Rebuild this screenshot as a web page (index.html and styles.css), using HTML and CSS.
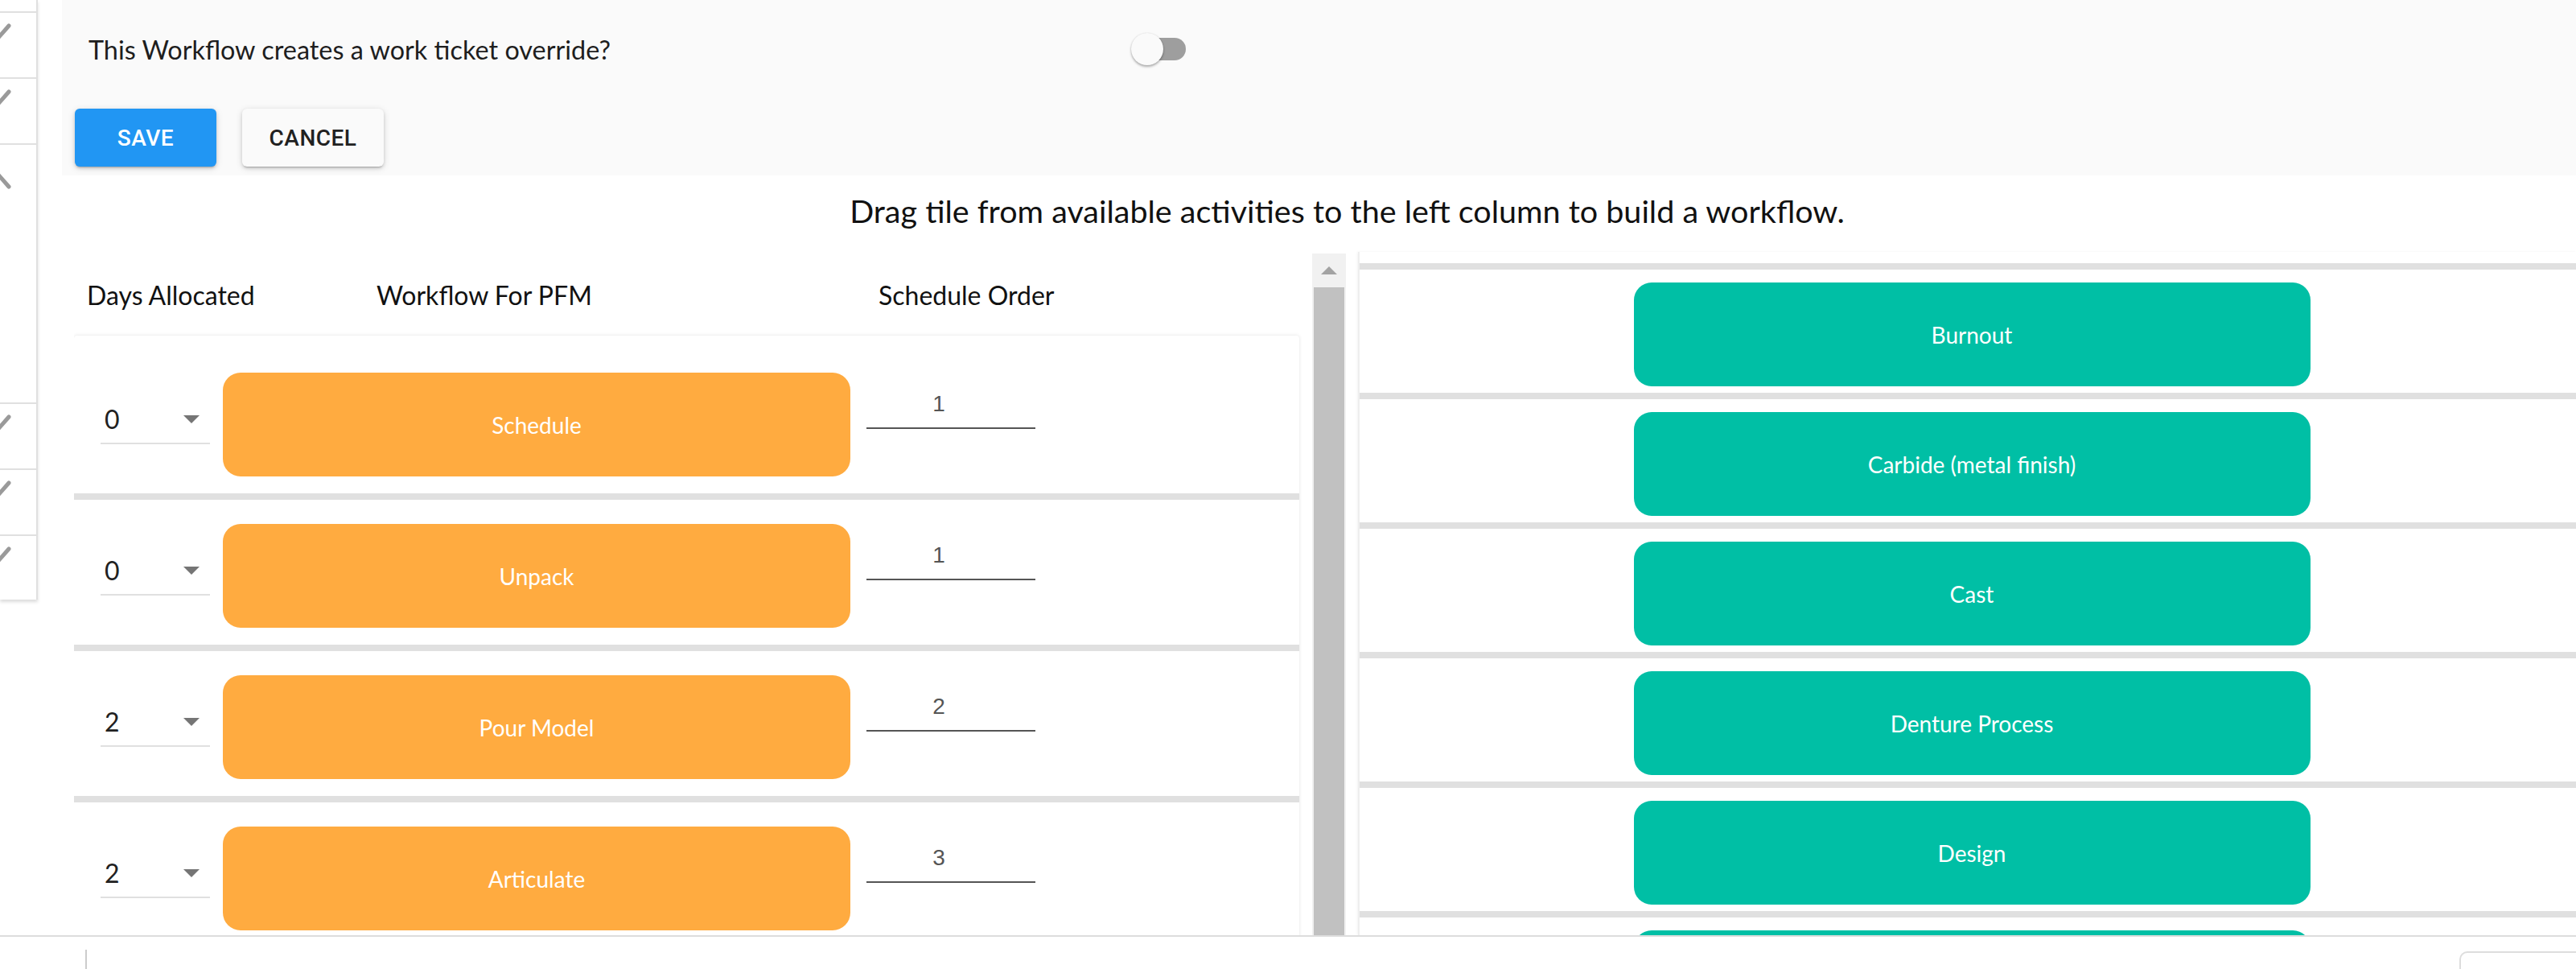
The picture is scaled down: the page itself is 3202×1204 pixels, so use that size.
FILE: index.html
```html
<!DOCTYPE html>
<html lang="en">
<head>
<meta charset="utf-8">
<title>Workflow builder</title>
<link rel="stylesheet" href="styles.css">
</head>
<body>
<div class="app">
  <aside class="sidebar">
    <div class="side-row"><svg class="mark" viewBox="0 0 14 22"><line x1="-3" y1="20" x2="11" y2="4"/></svg></div>
    <div class="side-row"><svg class="mark" viewBox="0 0 14 22"><line x1="-3" y1="20" x2="11" y2="4"/></svg></div>
    <div class="side-row tall"><svg class="mark" viewBox="0 0 14 22"><line x1="-3" y1="2" x2="11" y2="18"/></svg></div>
    <div class="side-row"><svg class="mark" viewBox="0 0 14 22"><line x1="-3" y1="20" x2="11" y2="4"/></svg></div>
    <div class="side-row"><svg class="mark" viewBox="0 0 14 22"><line x1="-3" y1="20" x2="11" y2="4"/></svg></div>
    <div class="side-row"><svg class="mark" viewBox="0 0 14 22"><line x1="-3" y1="20" x2="11" y2="4"/></svg></div>
  </aside>
  <main class="main">
    <section class="settings">
      <div class="setting-row">
        <span class="setting-label">This Workflow creates a work ticket override?</span>
        <span class="switch"><span class="switch-track"></span><span class="switch-knob"></span></span>
      </div>
      <div class="actions">
        <button class="btn btn-primary">Save</button>
        <button class="btn">Cancel</button>
      </div>
    </section>
    <h2 class="hint">Drag tile from available activities to the left column to build a workflow.</h2>
    <div class="builder">
      <div class="wf">
        <div class="wf-body">
          <div class="col-heads">
            <span class="head head-days">Days Allocated</span>
            <span class="head head-flow">Workflow For PFM</span>
            <span class="head">Schedule Order</span>
          </div>
          <div class="card">
            <div class="row">
              <div class="days"><span>0</span><span class="caret"></span></div>
              <div class="tile tile-orange">Schedule</div>
              <div class="order">1</div>
            </div>
            <div class="row">
              <div class="days"><span>0</span><span class="caret"></span></div>
              <div class="tile tile-orange">Unpack</div>
              <div class="order">1</div>
            </div>
            <div class="row">
              <div class="days"><span>2</span><span class="caret"></span></div>
              <div class="tile tile-orange">Pour Model</div>
              <div class="order">2</div>
            </div>
            <div class="row">
              <div class="days"><span>2</span><span class="caret"></span></div>
              <div class="tile tile-orange">Articulate</div>
              <div class="order">3</div>
            </div>
          </div>
        </div>
        <div class="scrollbar">
          <div class="sb-up"><span class="sb-arrow"></span></div>
          <div class="sb-thumb"></div>
        </div>
      </div>
      <div class="acts">
        <div class="act"><div class="tile tile-teal">Burnout</div></div>
        <div class="act"><div class="tile tile-teal">Carbide (metal finish)</div></div>
        <div class="act"><div class="tile tile-teal">Cast</div></div>
        <div class="act"><div class="tile tile-teal">Denture Process</div></div>
        <div class="act"><div class="tile tile-teal">Design</div></div>
        <div class="act"><div class="tile tile-teal"></div></div>
      </div>
    </div>
  </main>
</div>
<footer class="footer">
  <span class="footer-divider"></span>
  <span class="footer-box"></span>
</footer>
</body>
</html>
```

FILE: styles.css
```css
* { box-sizing: border-box; }
html, body { margin: 0; padding: 0; }
body {
  width: 3202px;
  height: 1204px;
  overflow: hidden;
  background: #fff;
  color: #212121;
  font-family: Lato, "Noto Sans", sans-serif;
  display: flex;
  flex-direction: column;
}

.app { display: flex; height: 1162px; flex: none; overflow: hidden; }

/* left strip */
.sidebar {
  width: 47px;
  height: 745px;
  flex: none;
  padding-top: 14px;
  background: #fff;
  border-right: 2px solid #e0e0e0;
  box-shadow: 0 3px 4px rgba(0,0,0,.14);
  overflow: hidden;
}
.side-row { height: 82px; border-top: 2px solid #e0e0e0; padding-top: 12px; }
.side-row.tall { height: 322px; padding-top: 34px; }
.mark { display: block; width: 14px; height: 22px; }
.mark line { stroke: #9a9a9a; stroke-width: 5; stroke-linecap: round; }

.main { flex: 1; min-width: 0; margin-left: 30px; display: flex; flex-direction: column; }

/* settings panel */
.settings { height: 218px; flex: none; background: #fafafa; padding-left: 16px; }
.setting-row { height: 122px; display: flex; align-items: center; padding-left: 17px; }
.setting-label { width: 1296px; font-size: 32.4px; color: #1e1e1e; }
.switch { position: relative; width: 68px; height: 40px; }
.switch-track { position: absolute; left: 4px; right: 0; top: 6px; height: 28px; border-radius: 14px; background: #9e9e9e; }
.switch-knob { position: absolute; left: 0; top: 0; width: 40px; height: 40px; border-radius: 50%; background: #fafafa; box-shadow: 0 2px 3px rgba(0,0,0,.3), 0 0 2px rgba(0,0,0,.12); }

.actions { display: flex; gap: 32px; margin-top: 13px; }
.btn {
  width: 176px; height: 72px;
  border: none; border-radius: 6px;
  background: #fafafa; color: #212121;
  font-family: Roboto, sans-serif; font-weight: 500; font-size: 28px; letter-spacing: 0.5px;
  text-transform: uppercase;
  box-shadow: 0 3px 2px -2px rgba(0,0,0,.2), 0 2px 4px rgba(0,0,0,.14), 0 2px 10px rgba(0,0,0,.12);
}
.btn-primary { background: #2196f3; color: #fff; }

/* instructions */
.hint {
  margin: 0; height: 95px; flex: none;
  padding: 18px 0 0 70px;
  font-size: 39.5px; font-weight: 400; line-height: 52px;
  text-align: center; color: #111;
}

/* builder */
.builder { flex: 1; min-height: 0; display: flex; gap: 15px; padding-left: 15px; }
.wf { width: 1581px; flex: none; display: flex; gap: 16px; padding-top: 2px; overflow: hidden; }
.wf-body { width: 1523px; flex: none; }

.col-heads { display: flex; padding: 30px 0 0 16px; margin-bottom: 28px; font-size: 32px; line-height: 44px; color: #111; }
.head-days { width: 360px; }
.head-flow { width: 624px; }

.card { background: #fff; padding-top: 16px; border-radius: 4px 4px 0 0; box-shadow: 0 0 4px rgba(0,0,0,.12); }
.row { height: 188px; display: flex; align-items: flex-start; gap: 16px; padding: 30px 0 0 33px; border-bottom: 8px solid #e0e0e0; }

.days {
  width: 136px; height: 53px; margin-top: 36px;
  display: flex; justify-content: space-between; align-items: flex-start;
  padding: 0 13px 0 5px;
  border-bottom: 2px solid #e0e0e0;
  font-size: 32px; line-height: 44px; color: #212121;
}
.caret { margin-top: 17px; width: 0; height: 0; border-left: 10px solid transparent; border-right: 10px solid transparent; border-top: 10px solid #757575; }

.tile {
  height: 129px; flex: none;
  display: flex; align-items: center; justify-content: center;
  border-radius: 22px; color: #fff; font-size: 28px;
}
.tile-orange { width: 780px; background: #ffab40; }
.tile-teal { width: 841px; background: #00bfa5; }

.order {
  width: 210px; height: 51px; margin: 19px 0 0 4px;
  padding-right: 30px;
  border-bottom: 2px solid #555;
  font-family: "Liberation Sans", Arial, sans-serif; font-size: 28px; line-height: 40px;
  text-align: center; color: #555;
}

.scrollbar { width: 42px; flex: none; background: #f1f1f1; display: flex; flex-direction: column; align-items: center; }
.sb-up { height: 42px; width: 100%; display: flex; align-items: center; justify-content: center; }
.sb-arrow { width: 0; height: 0; border-left: 10px solid transparent; border-right: 10px solid transparent; border-bottom: 10px solid #a3a3a3; }
.sb-thumb { flex: 1; width: 38px; background: #c1c1c1; }

.acts { flex: 1; min-width: 0; padding-top: 14px; overflow: hidden; border-left: 2px solid #eee; box-shadow: -1px 0 3px rgba(0,0,0,.05); }
.act { display: flex; justify-content: center; padding: 16px 0 8px 10px; border-top: 8px solid #e0e0e0; }

/* footer strip */
.footer { height: 42px; flex: none; display: flex; align-items: flex-start; border-top: 2px solid #ddd; background: #fff; }
.footer-divider { width: 2px; height: 24px; margin: 16px 0 0 106px; background: #ccc; }
.footer-box { width: 145px; height: 30px; margin: 18px 0 0 auto; border: 2px solid #ddd; border-right: none; border-bottom: none; border-radius: 10px 0 0 0; }
```
